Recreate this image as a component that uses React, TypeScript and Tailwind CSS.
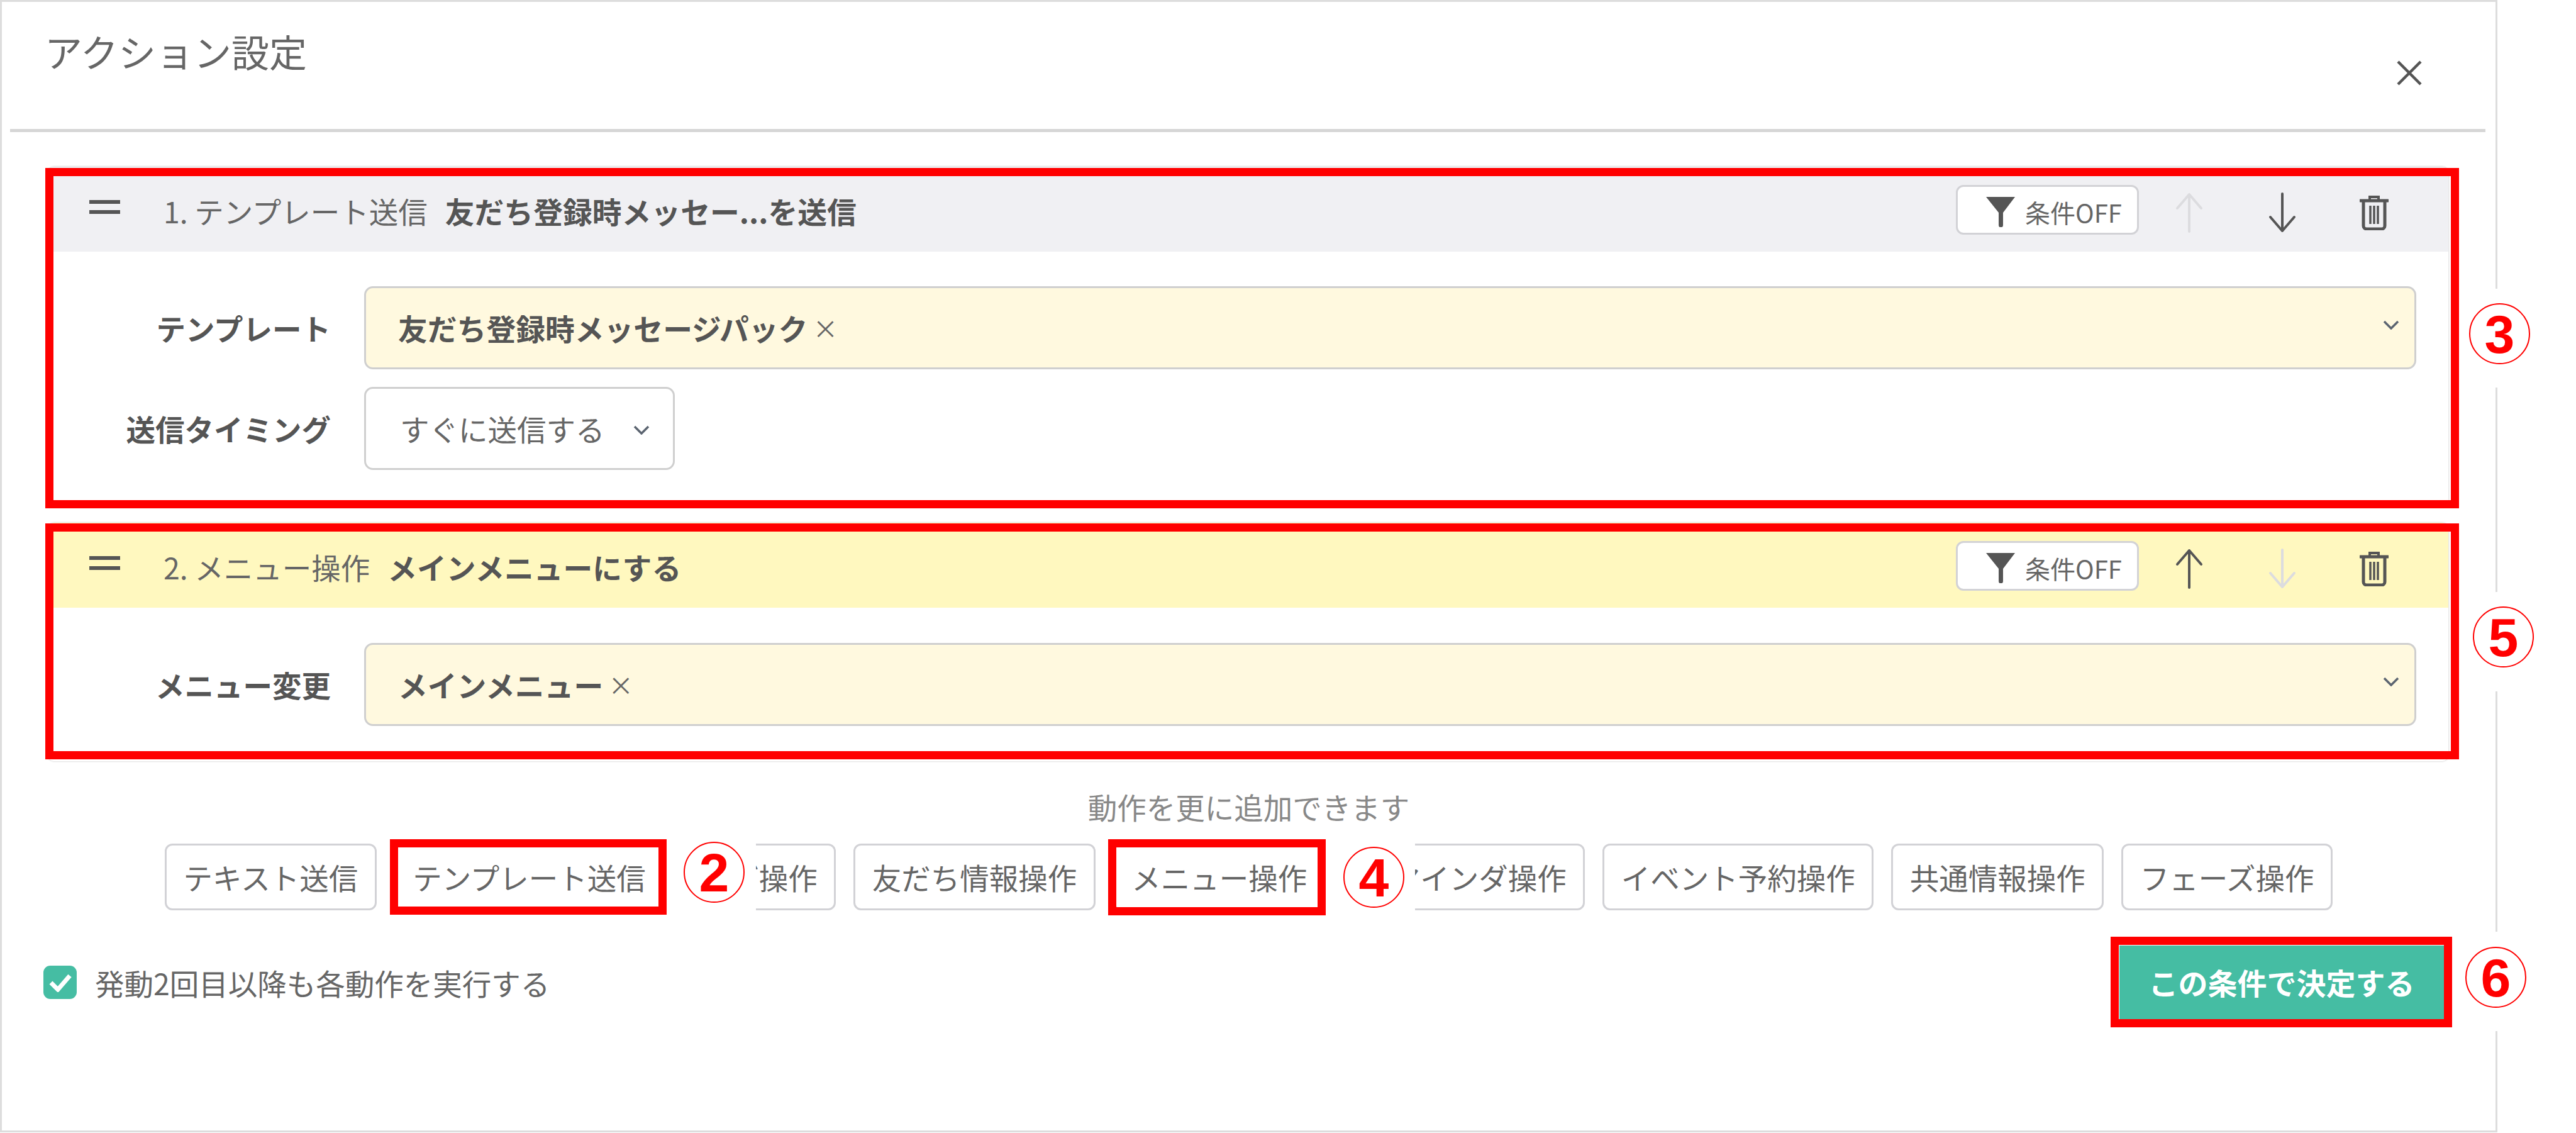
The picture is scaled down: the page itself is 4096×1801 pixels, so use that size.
const font = { fontFamily: '"Noto Sans CJK JP", "Noto Sans", sans-serif' };

function ArrowIcon({ down, muted }: { down?: boolean; muted?: boolean }) {
  return (
    <svg width="44" height="64" viewBox="0 0 44 64" fill="none" className={down ? "rotate-180" : ""}>
      <path
        d="M22 62V3M3 25 22 3l19 22"
        stroke={muted ? "#dcdcdf" : "#555555"}
        strokeWidth="4"
        strokeLinecap="round"
        strokeLinejoin="round"
      />
    </svg>
  );
}

function TrashIcon() {
  return (
    <svg width="46" height="56" viewBox="0 0 46 56" fill="none" stroke="#555555">
      <path d="M1 9h44" strokeWidth="5" strokeLinecap="round" />
      <path d="M16 7V3h14v4" strokeWidth="4" />
      <path d="M6 11v38a5 5 0 0 0 5 5h24a5 5 0 0 0 5-5V11" strokeWidth="5" />
      <path d="M17 17v29M23 17v29M29 17v29" strokeWidth="3.5" />
    </svg>
  );
}

function ConditionButton() {
  return (
    <div className="mt-[2px] flex h-[79px] w-[291px] items-center rounded-[12px] border-[3px] border-[#d2d2d6] bg-white pl-[45px]">
      <svg width="46" height="48" viewBox="0 0 46 48" fill="#555555" className="mt-[6px]">
        <path d="M0 0h46L27 25v20a3 3 0 0 1-7 0V25z" />
      </svg>
      <span className="ml-[16px] mt-[6px] text-[40px] leading-none text-[#666666]">条件OFF</span>
    </div>
  );
}

function CardHeader({ no, kind, detail, bg, upMuted, downMuted }: { no: string; kind: string; detail: string; bg: string; upMuted?: boolean; downMuted?: boolean }) {
  return (
    <div className={`flex h-[135px] items-center ${bg}`}>
      <div className="ml-[66px] mb-[8px] flex h-[22px] w-[49px] flex-col justify-between">
        <div className="h-[6px] bg-[#555555]" />
        <div className="h-[6px] bg-[#555555]" />
      </div>
      <div className="ml-[69px] mt-[4px] text-[46.5px] leading-[60px] text-[#666666]">{no} {kind}</div>
      <div className="ml-[28px] mt-[4px] text-[46.8px] font-bold leading-[60px] text-[#555555]">{detail}</div>
      <div className="ml-auto flex items-center">
        <ConditionButton />
        <div className="ml-[58px] mt-[10px]"><ArrowIcon muted={upMuted} /></div>
        <div className="ml-[104px] mt-[10px]"><ArrowIcon down muted={downMuted} /></div>
        <div className="ml-[101px] mr-[95px] mt-[10px]"><TrashIcon /></div>
      </div>
    </div>
  );
}

function Chevron({ className }: { className?: string }) {
  return (
    <svg width="26" height="15" viewBox="0 0 26 15" fill="none" className={className}>
      <path d="M2 2l11 11L24 2" stroke="#5b6470" strokeWidth="3.5" />
    </svg>
  );
}

function Label({ text }: { text: string }) {
  return <div className="w-[450px] shrink-0 text-right text-[46.5px] font-bold leading-[60px] text-[#555555]">{text}</div>;
}

function TagSelect({ text }: { text: string }) {
  return (
    <div className="flex h-[132px] flex-1 items-center rounded-[14px] border-[3px] border-[#cfcfcf] bg-[#fff9df] pl-[51px] pr-[24px]">
      <span className="text-[46.8px] font-bold leading-[60px] text-[#555555]">{text}</span>
      <span className="ml-[8px] text-[40px] leading-[60px] text-[#666666]">×</span>
      <Chevron className="mb-[10px] ml-auto" />
    </div>
  );
}

const actions = ["テキスト送信", "テンプレート送信", "タグ操作", "友だち情報操作", "メニュー操作", "リマインダ操作", "イベント予約操作", "共通情報操作", "フェーズ操作"];

export default function App() {
  return (
    <div className="relative h-[1801px] w-[4096px] overflow-hidden bg-white" style={font}>
      <div className="h-[1800px] w-[3971px] border-[3px] border-[#dddddd] bg-white">
        <div className="flex h-[202px] justify-between">
          <h1 className="ml-[68px] mt-[36px] text-[60px] font-normal leading-[84px] text-[#666666]">アクション設定</h1>
          <svg width="40" height="40" viewBox="0 0 40 40" fill="none" className="mr-[117px] mt-[93px]">
            <path d="M2 2l36 36M38 2 2 38" stroke="#555555" strokeWidth="4.5" />
          </svg>
        </div>
        <div className="ml-[13px] h-[5px] w-[3936px] bg-[#d6d6d6]" />

        <div className="ml-[73px] mt-[55px] w-[3817px] overflow-hidden rounded-[10px] shadow-[0_0_3px_#bbbbbb]">
          <CardHeader no="1." kind="テンプレート送信" detail="友だち登録時メッセー...を送信" bg="bg-[#f0f0f3]" upMuted />
          <div className="bg-white pb-[56px] pr-[51px] pt-[55px]">
            <div className="flex items-center">
              <Label text="テンプレート" />
              <div className="ml-[53px] flex flex-1">
                <TagSelect text="友だち登録時メッセージパック" />
              </div>
            </div>
            <div className="mt-[28px] flex items-center">
              <Label text="送信タイミング" />
              <div className="ml-[53px] flex h-[132px] w-[494px] items-center rounded-[14px] border-[3px] border-[#cfcfcf] bg-white pl-[54px]">
                <span className="text-[46.5px] leading-[60px] text-[#666666]">すぐに送信する</span>
                <Chevron className="ml-[45px] mt-[4px]" />
              </div>
            </div>
          </div>
        </div>

        <div className="ml-[73px] mt-[28px] w-[3817px] overflow-hidden rounded-[10px] shadow-[0_0_3px_#bbbbbb]">
          <CardHeader no="2." kind="メニュー操作" detail="メインメニューにする" bg="bg-[#fff8bf]" downMuted />
          <div className="flex items-center bg-white pb-[56px] pr-[51px] pt-[56px]">
            <Label text="メニュー変更" />
            <div className="ml-[53px] flex flex-1">
              <TagSelect text="メインメニュー" />
            </div>
          </div>
        </div>

        <p className="mt-[42px] text-center text-[46.5px] leading-[60px] text-[#888888]">動作を更に追加できます</p>
        <div className="mt-[29px] flex justify-center gap-[28px]">
          {actions.map((a) => (
            <div key={a} className="flex h-[106px] items-center rounded-[12px] border-[3px] border-[#d2d2d6] bg-white px-[26.5px] text-[46.5px] text-[#666666]">{a}</div>
          ))}
        </div>

        <div className="ml-[66px] mr-[82px] mt-[56px] flex items-center justify-between">
          <div className="flex items-center">
            <div className="flex h-[53px] w-[53px] items-center justify-center rounded-[11px] bg-[#45bda3]">
              <svg width="36" height="30" viewBox="0 0 36 30" fill="none">
                <path d="M3 15l11 11L33 4" stroke="#ffffff" strokeWidth="7" />
              </svg>
            </div>
            <span className="ml-[29px] text-[46.5px] leading-[60px] text-[#666666]">発動2回目以降も各動作を実行する</span>
          </div>
          <button className="h-[117px] w-[516px] bg-[#45bda3] text-center text-[47px] font-bold text-white">この条件で決定する</button>
        </div>
      </div>

      {/* annotations */}
      <div className="absolute left-[72px] top-[267px] h-[541px] w-[3838px] border-[13px] border-[#ff0000]" />
      <div className="absolute left-[72px] top-[832px] h-[375px] w-[3838px] border-[13px] border-[#ff0000]" />
      <div className="absolute left-[620px] top-[1334px] h-[120px] w-[440px] border-[13px] border-[#ff0000]" />
      <div className="absolute left-[1762px] top-[1334px] h-[121px] w-[346px] border-[13px] border-[#ff0000]" />
      <div className="absolute left-[3356px] top-[1489px] h-[144px] w-[543px] border-[13px] border-[#ff0000]" />

      <div className="absolute left-[1060px] top-[1330px] h-[125px] w-[142px] bg-white" />
      <div className="absolute left-[2108px] top-[1330px] h-[125px] w-[142px] bg-white" />
      <div className="absolute left-[3912px] top-[459px] h-[157px] w-[127px] bg-white" />
      <div className="absolute left-[3912px] top-[941px] h-[158px] w-[127px] bg-white" />
      <div className="absolute left-[3900px] top-[1481px] h-[158px] w-[127px] bg-white" />

      <Marker n="2" pos="left-[1087px] top-[1338px]" />
      <Marker n="4" pos="left-[2136px] top-[1346px]" />
      <Marker n="3" pos="left-[3926px] top-[482px]" />
      <Marker n="5" pos="left-[3932px] top-[964px]" />
      <Marker n="6" pos="left-[3920px] top-[1505px]" />
    </div>
  );
}

function Marker({ n, pos }: { n: string; pos: string }) {
  return (
    <div className={`absolute flex h-[97px] w-[97px] items-center justify-center rounded-full border-[2px] border-[#ff0000] bg-white text-[86px] font-bold leading-none text-[#ff0000] ${pos}`} style={{ fontFamily: '"Liberation Sans", sans-serif' }}>
      {n}
    </div>
  );
}
